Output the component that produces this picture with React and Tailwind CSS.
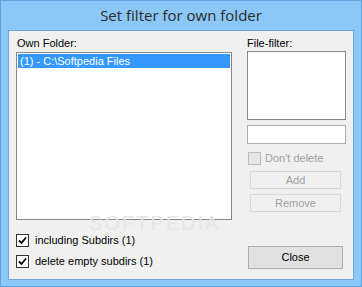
import React from "react";

function Check({ checked, disabled }) {
  return (
    <div
      className={
        "w-[13px] h-[13px] flex items-center justify-center border " +
        (disabled ? "border-[#bcbcbc] bg-[#e6e6e6]" : "border-[#333333] bg-white")
      }
    >
      {checked && (
        <svg width="9" height="9" viewBox="0 0 9 9">
          <path d="M1 4.5 L3.5 7 L8 1.5" stroke="#000" strokeWidth="1.8" fill="none" />
        </svg>
      )}
    </div>
  );
}

export default function App() {
  return (
    <div
      className="w-[362px] h-[287px] bg-[#8bc7f7] border border-[#5fa3dc] flex flex-col relative overflow-hidden"
      style={{ fontFamily: "Tahoma, 'DejaVu Sans', sans-serif" }}
    >
      <div
        className="h-[29px] flex items-center justify-center text-[15px] text-[#2b2b2b]"
        style={{ fontFamily: "'Segoe UI', 'Open Sans', 'Noto Sans', sans-serif" }}
      >
        Set filter for own folder
      </div>
      <div className="mx-[7px] mb-[6px] flex-1 border border-[#6aa8e0] bg-[#f0f0f0] flex text-[11px] text-black relative" style={{ fontFamily: "'Liberation Sans', Arial, sans-serif" }}>
        <div className="flex flex-col pl-[7px] pt-[5px] w-[231px]">
          <div className="h-[14px] leading-[14px] pl-[1px]">Own Folder:</div>
          <div className="mt-[2px] w-[216px] h-[168px] border border-[#828790] bg-white p-[1px]">
            <div className="h-[14px] leading-[14px] bg-[#3399ff] text-white pl-[2px]">
              (1) - C:\Softpedia Files
            </div>
          </div>
          <div className="mt-[14px] flex items-center gap-[6px] h-[13px] relative z-10">
            <Check checked />
            <span>including Subdirs (1)</span>
          </div>
          <div className="mt-[8px] flex items-center gap-[6px] h-[13px] relative z-10">
            <Check checked />
            <span>delete empty subdirs (1)</span>
          </div>
        </div>
        <div className="flex flex-col pl-[7px] pt-[5px] w-[100px]">
          <div className="h-[14px] leading-[14px]">File-filter:</div>
          <div className="mt-[1px] w-[99px] h-[69px] border border-[#828790] bg-white"></div>
          <div className="mt-[5px] w-[99px] h-[19px] border border-[#abadb3] bg-white"></div>
          <div className="mt-[8px] flex items-center gap-[4px] h-[13px] pl-[1px]">
            <Check disabled />
            <span className="text-[#a0a0a0]">Don't delete</span>
          </div>
          <div className="mt-[6px] ml-[3px] w-[91px] h-[18px] border border-[#d9d9d9] bg-[#f0f0f0] text-[#a0a0a0] flex items-center justify-center">
            Add
          </div>
          <div className="mt-[5px] ml-[3px] w-[91px] h-[18px] border border-[#d9d9d9] bg-[#f0f0f0] text-[#a0a0a0] flex items-center justify-center">
            Remove
          </div>
          <div className="mt-[34px] ml-[1px] w-[95px] h-[23px] border border-[#adadad] bg-[#e1e1e1] flex items-center justify-center">
            Close
          </div>
        </div>
        <div
          className="absolute left-[80px] top-[182px] text-[20px] leading-[20px] tracking-[2px] text-[#e6e6e6] pointer-events-none"
          style={{ fontFamily: "'Liberation Sans', Arial, sans-serif" }}
        >
          SOFTPEDIA
        </div>
      </div>
    </div>
  );
}
